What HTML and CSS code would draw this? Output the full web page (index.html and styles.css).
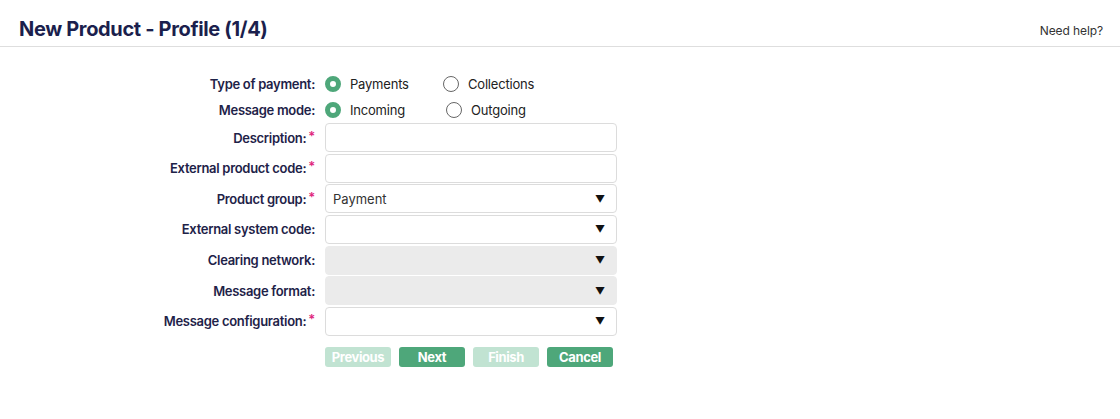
FILE: index.html
```html
<!DOCTYPE html>
<html>
<head>
<meta charset="utf-8">
<link rel="stylesheet" href="styles.css">
</head>
<body>
<header class="page-head">
  <h1 class="title">New Product - Profile (1/4)</h1>
  <a class="help">Need help?</a>
</header>
<form class="form">
  <div class="row radio-row">
    <label class="lbl">Type of payment:</label>
    <div class="radios">
      <span class="opt opt-a"><span class="radio on"></span>Payments</span>
      <span class="opt"><span class="radio"></span>Collections</span>
    </div>
  </div>
  <div class="row radio-row">
    <label class="lbl">Message mode:</label>
    <div class="radios">
      <span class="opt opt-b"><span class="radio on"></span>Incoming</span>
      <span class="opt"><span class="radio"></span>Outgoing</span>
    </div>
  </div>
  <div class="row field-row first-field">
    <label class="lbl">Description:<span class="req">*</span></label>
    <div class="input"></div>
  </div>
  <div class="row field-row">
    <label class="lbl">External product code:<span class="req">*</span></label>
    <div class="input"></div>
  </div>
  <div class="row field-row">
    <label class="lbl">Product group:<span class="req">*</span></label>
    <div class="input select"><span class="val">Payment</span><span class="arrow">▼</span></div>
  </div>
  <div class="row field-row">
    <label class="lbl">External system code:</label>
    <div class="input select"><span class="val"></span><span class="arrow">▼</span></div>
  </div>
  <div class="row field-row">
    <label class="lbl">Clearing network:</label>
    <div class="input select disabled"><span class="val"></span><span class="arrow">▼</span></div>
  </div>
  <div class="row field-row">
    <label class="lbl">Message format:</label>
    <div class="input select disabled"><span class="val"></span><span class="arrow">▼</span></div>
  </div>
  <div class="row field-row">
    <label class="lbl">Message configuration:<span class="req">*</span></label>
    <div class="input select"><span class="val"></span><span class="arrow">▼</span></div>
  </div>
  <div class="row btn-row">
    <span></span>
    <div class="btns">
      <span class="btn off">Previous</span>
      <span class="btn">Next</span>
      <span class="btn off">Finish</span>
      <span class="btn">Cancel</span>
    </div>
  </div>
</form>
</body>
</html>
```
FILE: styles.css
```css
* { box-sizing: border-box; }
body {
  margin: 0;
  font-family: Inter, "Noto Sans", sans-serif;
  color: #1e2248;
  background: #fff;
}
.page-head {
  display: flex;
  justify-content: space-between;
  align-items: flex-end;
  height: 47px;
  padding: 0 17px 0 19px;
  border-bottom: 1px solid #dedede;
}
.title {
  margin: 0 0 5px;
  font-size: 20px;
  font-weight: 700;
  letter-spacing: -0.35px;
  color: #1b1f4d;
}
.help {
  font-size: 12px;
  color: #333;
  margin-bottom: 8px;
  letter-spacing: -0.1px;
}
.form {
  display: flex;
  flex-direction: column;
  padding-top: 24px;
}
.row {
  display: grid;
  grid-template-columns: 315px 292px;
  column-gap: 10px;
  align-items: center;
}
.lbl {
  text-align: right;
  font-size: 13px;
  font-weight: 600;
  letter-spacing: -0.3px;
  color: #1e2248;
}
.req {
  color: #e0267d;
  margin-left: 2px;
  position: relative;
  top: -2px;
}
.radio-row { height: 26px; }
.radios {
  display: flex;
  font-size: 13px;
  letter-spacing: -0.2px;
  color: #222;
}
.opt {
  display: flex;
  align-items: center;
  gap: 9px;
}
.opt-a { width: 118px; }
.opt-b { width: 121px; }
.radio {
  width: 16px;
  height: 16px;
  border-radius: 50%;
  border: 1px solid #666;
  background: #fff;
}
.radio.on {
  border: 5px solid #4ea77a;
  background: #fff;
}
.field-row { margin-top: 1.67px; }
.field-row.first-field { margin-top: 0; }
.input {
  height: 29px;
  border: 1px solid #dcdcdc;
  border-radius: 4px;
  background: #fff;
}
.select {
  display: flex;
  align-items: center;
  justify-content: space-between;
  padding: 0 11px 0 7px;
  font-size: 13px;
  color: #333;
}
.arrow { font-size: 10px; color: #111; }
.disabled {
  background: #ebebeb;
  border-color: #ebebeb;
}
.btn-row { margin-top: 11px; }
.btns { display: flex; gap: 8px; }
.btn {
  width: 66px;
  height: 20px;
  border-radius: 3px;
  background: #4ea77a;
  color: #fff;
  font-size: 13px;
  font-weight: 700;
  letter-spacing: -0.4px;
  display: flex;
  align-items: center;
  justify-content: center;
}
.btn.off { background: #c1e3d2; }
```
